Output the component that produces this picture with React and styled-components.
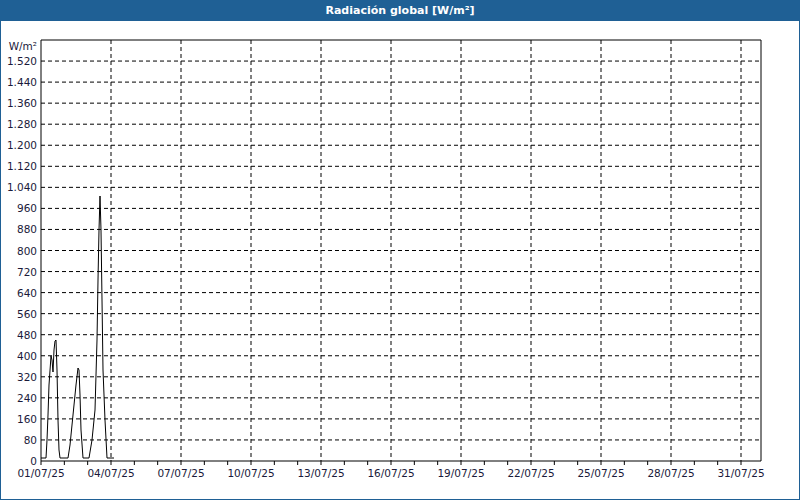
import React from 'react';
import styled, { createGlobalStyle } from 'styled-components';

const Global = createGlobalStyle`
  html, body { margin: 0; padding: 0; background: #fff; }
`;

const Frame = styled.div`
  width: 800px;
  height: 500px;
  box-sizing: border-box;
  border: 1px solid #1f6095;
  border-top: none;
  display: flex;
  flex-direction: column;
  font-family: "DejaVu Sans", Tahoma, sans-serif;
`;

const TitleBar = styled.div`
  height: 21px;
  background: #1f6095;
  color: #fff;
  font-size: 11px;
  font-weight: bold;
  display: flex;
  align-items: center;
  justify-content: center;
  margin: 0 -1px;
`;

const Chart = styled.svg`
  display: block;
  flex: 1;
`;

const L = 40, R = 760, T = 40, B = 461;
const yOf = v => B - (v / 1600) * (B - T);
const xOf = d => L + d * (700 / 30);

const pts = [
  [40,458],[45,458],[46,440],[47,415],[48,385],[50,356],[51,360],[52,372],[53,350],[54,341],[55,340],[56,370],[57,420],[58,450],[59,458],
  [67,458],[69,445],[72,415],[75,385],[77,368],[78,370],[79,395],[80,430],[82,458],
  [88,458],[91,440],[94,410],[96,340],[97,280],[98,230],[99,196],[100,230],[101,300],[102,370],[104,420],[106,458],[113,458],
].map(p => p.join(',')).join(' ');

export default function App() {
  const yTicks = [];
  for (let v = 0; v <= 1520; v += 80) yTicks.push(v);
  const days = [];
  for (let d = 0; d <= 30; d++) days.push(d);
  const fmt = v => v >= 1000 ? `${Math.floor(v / 1000)}.${String(v % 1000).padStart(3, '0')}` : String(v);
  return (
    <>
      <Global />
      <Frame>
        <TitleBar>Radiación global [W/m²]</TitleBar>
        <Chart viewBox="0 21 798 478" width="798" height="478">
          <g fontSize="10.5" fill="#1a1a3a" fontFamily='"DejaVu Sans", sans-serif'>
            <text x="36" y="50" textAnchor="end">W/m²</text>
            {yTicks.map(v => (
              <g key={v}>
                {v > 0 && <line x1={L} x2={R} y1={yOf(v)} y2={yOf(v)} stroke="#000" strokeDasharray="4 3" />}
                <text x="36" y={yOf(v) + 4} textAnchor="end">{fmt(v)}</text>
              </g>
            ))}
            {days.map(d => (
              <g key={d}>
                <line x1={xOf(d)} x2={xOf(d)} y1={B} y2={B + 4} stroke="#000" />
                {d % 3 === 0 && d > 0 && <line x1={xOf(d)} x2={xOf(d)} y1={T} y2={B} stroke="#000" strokeDasharray="4 3" />}
                {d % 3 === 0 && <text x={xOf(d)} y={B + 16} textAnchor="middle">{`${String(d + 1).padStart(2, '0')}/07/25`}</text>}
              </g>
            ))}
            <line x1={L} x2={L} y1={T} y2={B} stroke="#000" />
            <line x1={L} x2={R} y1={B} y2={B} stroke="#000" />
            <line x1={R} x2={R} y1={T} y2={B} stroke="#000" />
            <line x1={L} x2={R} y1={T} y2={T} stroke="#000" />
            <polyline points={pts} fill="none" stroke="#000" strokeWidth="1" />
          </g>
        </Chart>
      </Frame>
    </>
  );
}
